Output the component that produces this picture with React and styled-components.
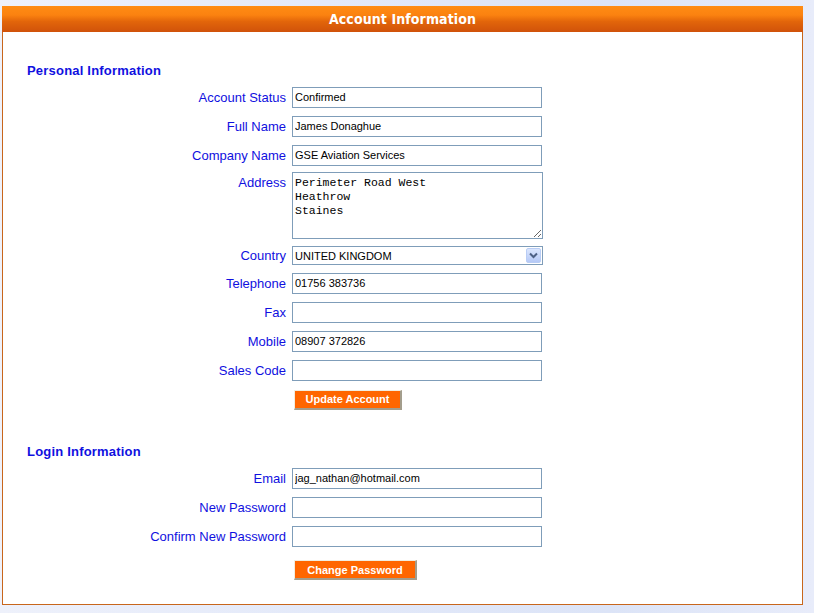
import React from "react";
import styled, { createGlobalStyle } from "styled-components";

const Global = createGlobalStyle`
  html, body { margin: 0; padding: 0; }
  body {
    background: linear-gradient(90deg, #eef1fb 0%, #e3e9f9 40%, #dce4f7 75%, #e8ecfa 100%);
    min-height: 613px;
    font-family: "Liberation Sans", Arial, sans-serif;
  }
`;

const Page = styled.div`
  padding: 6px 0 0 2px;
`;

const Panel = styled.div`
  width: 801px;
  display: flex;
  flex-direction: column;
`;

const Header = styled.div`
  height: 26px;
  display: flex;
  align-items: center;
  justify-content: center;
  background: linear-gradient(#ff8c14 0%, #fb8210 35%, #e2650a 60%, #d0520a 100%);
  color: #fff;
  font-family: "DejaVu Sans Condensed", "DejaVu Sans", sans-serif;
  font-weight: bold;
  font-size: 14px;
  letter-spacing: 0.1px;
`;

const Body = styled.div`
  background: #fff;
  border: 1px solid #c8661c;
  border-top: none;
  padding: 31px 0 24px 0;
  display: flex;
  flex-direction: column;
`;

const SectionTitle = styled.div`
  padding-left: 24px;
  margin-top: ${(p) => p.$top || 0}px;
  font-family: "Liberation Sans", Arial, sans-serif;
  font-weight: bold;
  font-size: 13px;
  letter-spacing: 0.2px;
  line-height: 16px;
  color: #1010e0;
`;

const FormGrid = styled.div`
  display: grid;
  grid-template-columns: 283px 251px;
  column-gap: 6px;
  row-gap: 8px;
  margin-top: 8px;
`;

const Label = styled.label`
  justify-self: end;
  align-self: start;
  padding-top: 3px;
  line-height: 15px;
  font-size: 13px;
  color: #1010e0;
  white-space: nowrap;
  margin-top: ${(p) => p.$shift || 0}px;
`;

const TextInput = styled.input`
  box-sizing: border-box;
  width: 250px;
  height: 21px;
  margin: 0;
  border: 1px solid #7f9db9;
  padding: 0 2px 1px;
  font-family: "Liberation Sans", Arial, sans-serif;
  font-size: 11px;
  color: #000;
  background: #fff;
  outline: none;
`;

const TextArea = styled.textarea`
  box-sizing: border-box;
  width: 251px;
  height: 67px;
  margin: -2px 0 0 0;
  border: 1px solid #7f9db9;
  padding: 3px 2px;
  font-family: "Liberation Mono", "Courier New", monospace;
  font-size: 11.5px;
  line-height: 14px;
  color: #000;
  background: #fff;
  outline: none;
  resize: both;
`;

const SelectBox = styled.div`
  box-sizing: border-box;
  width: 251px;
  height: 19px;
  margin-top: -1px;
  border: 1px solid #7f9db9;
  display: flex;
  align-items: center;
  background: #fff;
  padding-right: 1px;
`;

const Select = styled.select`
  flex: 1;
  appearance: none;
  border: none;
  background: transparent;
  height: 17px;
  padding: 0 0 0 2px;
  margin: 0;
  font-family: "Liberation Sans", Arial, sans-serif;
  font-size: 11px;
  color: #000;
  outline: none;
`;

const DropButton = styled.div`
  box-sizing: border-box;
  width: 15px;
  height: 15px;
  border: 1px solid #b9cdf5;
  border-radius: 2px;
  background: linear-gradient(#dbe6fd, #b5c9f7);
  display: flex;
  align-items: center;
  justify-content: center;
`;

const ButtonCell = styled.div`
  grid-column: 2;
  padding-left: 2px;
  margin-top: ${(p) => p.$top || 0}px;
`;

const OrangeButton = styled.button`
  box-sizing: border-box;
  height: 20px;
  padding: 0 10px;
  background: #ff6600;
  color: #fff;
  font-family: "Liberation Sans", Arial, sans-serif;
  font-weight: bold;
  font-size: 11px;
  border-style: solid;
  border-width: 1px 2px 2px 1px;
  border-color: #f1ede0 #a39d8c #a39d8c #f1ede0;
  cursor: pointer;
  width: ${(p) => p.$w}px;
`;

function Field({ label, value }) {
  return (
    <>
      <Label>{label}</Label>
      <TextInput defaultValue={value} />
    </>
  );
}

export default function App() {
  return (
    <>
      <Global />
      <Page>
        <Panel>
          <Header>Account Information</Header>
          <Body>
            <SectionTitle>Personal Information</SectionTitle>
            <FormGrid>
              <Field label="Account Status" value="Confirmed" />
              <Field label="Full Name" value="James Donaghue" />
              <Field label="Company Name" value="GSE Aviation Services" />
              <Label $shift={-2}>Address</Label>
              <TextArea
                defaultValue={"Perimeter Road West\nHeathrow\nStaines"}
              />
              <Label $shift={-2}>Country</Label>
              <SelectBox>
                <Select defaultValue="UK">
                  <option value="UK">UNITED KINGDOM</option>
                </Select>
                <DropButton>
                  <svg width="9" height="7" viewBox="0 0 9 7">
                    <path
                      d="M1 1.5 L4.5 5 L8 1.5"
                      fill="none"
                      stroke="#4d6185"
                      strokeWidth="2"
                    />
                  </svg>
                </DropButton>
              </SelectBox>
              <Field label="Telephone" value="01756 383736" />
              <Field label="Fax" value="" />
              <Field label="Mobile" value="08907 372826" />
              <Field label="Sales Code" value="" />
              <ButtonCell>
                <OrangeButton $w={108}>Update Account</OrangeButton>
              </ButtonCell>
            </FormGrid>
            <SectionTitle $top={34}>Login Information</SectionTitle>
            <FormGrid>
              <Field label="Email" value="jag_nathan@hotmail.com" />
              <Field label="New Password" value="" />
              <Field label="Confirm New Password" value="" />
              <ButtonCell $top={5}>
                <OrangeButton $w={123}>Change Password</OrangeButton>
              </ButtonCell>
            </FormGrid>
          </Body>
        </Panel>
      </Page>
    </>
  );
}
